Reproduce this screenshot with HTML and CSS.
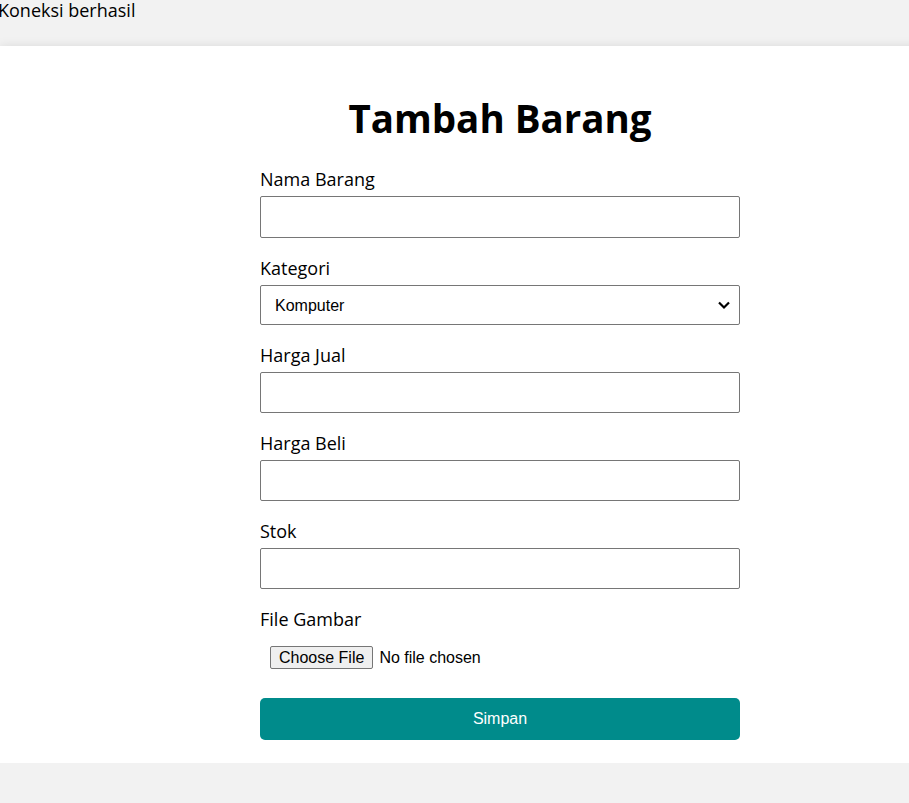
FILE: index.html
```html
<!DOCTYPE html>
<html lang="id">
<head>
<meta charset="utf-8">
<title>Tambah Barang</title>
<link rel="stylesheet" href="styles.css">
</head>
<body>
<div class="status">Koneksi berhasil</div>
<main class="card">
  <h1 class="title">Tambah Barang</h1>
  <form class="form">
    <div class="field">
      <label class="label" for="nama">Nama Barang</label>
      <input class="control control-first" type="text" id="nama">
    </div>
    <div class="field">
      <label class="label" for="kategori">Kategori</label>
      <div class="select-wrap">
        <select class="control select" id="kategori">
          <option>Komputer</option>
          <option>Elektronik</option>
          <option>Hand Phone</option>
        </select>
        <svg class="chevron" width="14" height="10" viewBox="0 0 14 10"><path d="M2 2.5 L7 7.5 L12 2.5" fill="none" stroke="#000" stroke-width="2.2"/></svg>
      </div>
    </div>
    <div class="field">
      <label class="label" for="jual">Harga Jual</label>
      <input class="control" type="text" id="jual">
    </div>
    <div class="field">
      <label class="label" for="beli">Harga Beli</label>
      <input class="control" type="text" id="beli">
    </div>
    <div class="field">
      <label class="label" for="stok">Stok</label>
      <input class="control" type="text" id="stok">
    </div>
    <div class="field">
      <label class="label" for="gambar">File Gambar</label>
      <input class="file" type="file" id="gambar">
    </div>
    <button class="submit" type="button">Simpan</button>
  </form>
</main>
</body>
</html>
```
FILE: styles.css
```css
html, body {
  overflow-x: hidden;
}
body {
  margin: 0;
  background: #f2f2f2;
  font-family: "Open Sans", "Noto Sans", sans-serif;
  font-size: 18px;
  color: #000;
}
.status {
  height: 46px;
  line-height: 20px;
  text-indent: -2px;
  white-space: nowrap;
}
.card {
  width: 1000px;
  background: #fff;
  box-shadow: 0 0 10px rgba(0, 0, 0, 0.1);
  padding: 48px 0 23px;
  box-sizing: border-box;
}
.title {
  margin: 0 0 25px;
  text-align: center;
  font-size: 38.5px;
  line-height: 48px;
  font-weight: 700;
}
.form {
  width: 480px;
  margin: 0 auto;
  display: flex;
  flex-direction: column;
}
.field {
  display: flex;
  flex-direction: column;
  margin-bottom: 18px;
}
.label {
  line-height: 24px;
  margin-bottom: 5px;
}
.control {
  box-sizing: border-box;
  width: 100%;
  height: 41px;
  border: 1px solid #767676;
  border-radius: 2px;
  background: #fff;
  font-family: "Liberation Sans", Arial, sans-serif;
  font-size: 16px;
  padding: 0 10px;
  margin: 0;
}
.control-first {
  height: 42px;
}
.select-wrap {
  position: relative;
}
.select {
  appearance: none;
  -webkit-appearance: none;
  height: 40px;
  padding-left: 14px;
  color: #000;
}
.chevron {
  position: absolute;
  right: 9px;
  top: 15px;
}
.file {
  font-family: "Liberation Sans", Arial, sans-serif;
  font-size: 16px;
  padding: 10px;
  margin: 0;
  height: 43px;
  box-sizing: border-box;
  color: #000;
}
.file::file-selector-button {
  font-family: "Liberation Sans", Arial, sans-serif;
  font-size: 16px;
  height: 23px;
  padding: 0 8px;
  margin: 0 6px 0 0;
  background: #efefef;
  border: 1px solid #767676;
  border-radius: 2px;
  color: #000;
}
.submit {
  height: 42px;
  border: none;
  border-radius: 5px;
  background: #008b8b;
  color: #fff;
  font-family: "Liberation Sans", Arial, sans-serif;
  font-size: 16px;
  margin-top: 1px;
  cursor: pointer;
}
```
